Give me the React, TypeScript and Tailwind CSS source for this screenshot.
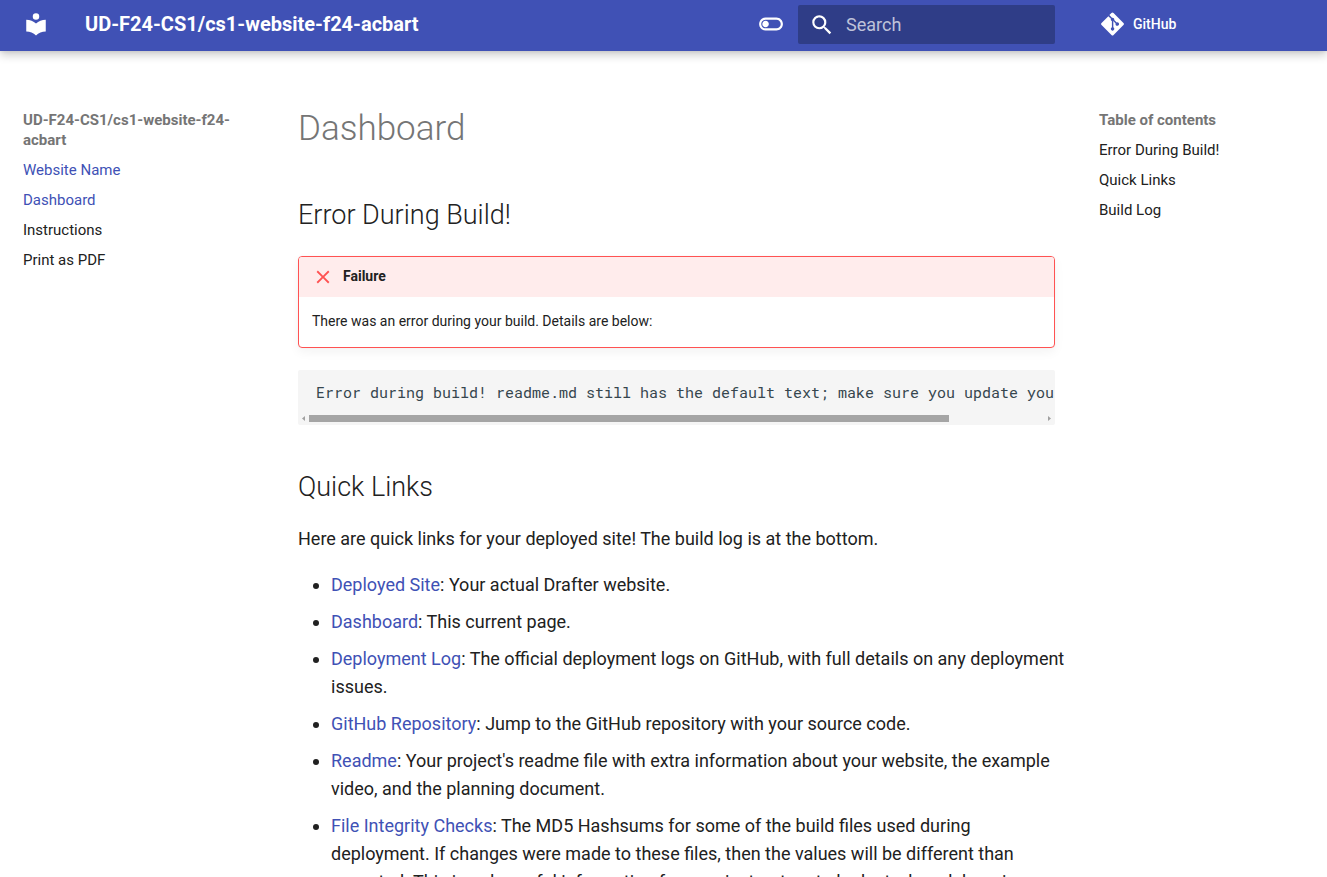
import React from "react";

const nav = [
  { label: "Website Name", active: true },
  { label: "Dashboard", active: true },
  { label: "Instructions", active: false },
  { label: "Print as PDF", active: false },
];

const toc = ["Error During Build!", "Quick Links", "Build Log"];

const links = [
  { name: "Deployed Site", text: "Your actual Drafter website." },
  { name: "Dashboard", text: "This current page." },
  {
    name: "Deployment Log",
    text: "The official deployment logs on GitHub, with full details on any deployment issues.",
  },
  { name: "GitHub Repository", text: "Jump to the GitHub repository with your source code." },
  {
    name: "Readme",
    text: "Your project's readme file with extra information about your website, the example video, and the planning document.",
  },
  {
    name: "File Integrity Checks",
    text: "The MD5 Hashsums for some of the build files used during deployment. If changes were made to these files, then the values will be different than expected. This is only useful information for your instructors to look at when debugging.",
  },
];

function Icon({ d, className }: { d: string; className: string }) {
  return (
    <svg viewBox="0 0 24 24" className={className} fill="currentColor" aria-hidden="true">
      <path d={d} />
    </svg>
  );
}

const LIBRARY =
  "M12 8a3 3 0 0 0 3-3 3 3 0 0 0-3-3 3 3 0 0 0-3 3 3 3 0 0 0 3 3m0 3.54C9.64 9.35 6.5 8 3 8v11c3.5 0 6.64 1.35 9 3.54 2.36-2.19 5.5-3.54 9-3.54V8c-3.5 0-6.64 1.35-9 3.54Z";
const TOGGLE =
  "M17 6H7c-3.31 0-6 2.69-6 6s2.69 6 6 6h10c3.31 0 6-2.69 6-6s-2.69-6-6-6zm0 10H7c-2.21 0-4-1.79-4-4s1.79-4 4-4h10c2.21 0 4 1.79 4 4s-1.79 4-4 4zM7 9c-1.66 0-3 1.34-3 3s1.34 3 3 3 3-1.34 3-3-1.34-3-3-3z";
const MAGNIFY =
  "M9.5 3A6.5 6.5 0 0 1 16 9.5c0 1.61-.59 3.09-1.56 4.23l.27.27h.79l5 5-1.5 1.5-5-5v-.79l-.27-.27A6.516 6.516 0 0 1 9.5 16 6.5 6.5 0 0 1 3 9.5 6.5 6.5 0 0 1 9.5 3m0 2C7 5 5 7 5 9.5S7 14 9.5 14 14 12 14 9.5 12 5 9.5 5Z";
const CLOSE =
  "M19 6.41 17.59 5 12 10.59 6.41 5 5 6.41 10.59 12 5 17.59 6.41 19 12 13.41 17.59 19 19 17.59 13.41 12 19 6.41Z";
const GIT =
  "M439.55 236.05 244 40.45a28.87 28.87 0 0 0-40.81 0l-40.66 40.63 51.52 51.52c27.06-9.14 52.68 16.77 43.39 43.68l49.66 49.66c34.23-11.8 61.18 31 35.47 56.69-26.49 26.49-70.21-2.87-56-37.34L240.22 199v121.85c25.3 12.54 22.26 41.85 9.08 55a34.34 34.34 0 0 1-48.55 0c-17.57-17.6-11.07-46.91 11.25-56v-123c-20.8-8.51-24.6-30.74-18.64-45L142.57 101 8.45 235.14a28.86 28.86 0 0 0 0 40.81l195.61 195.6a28.86 28.86 0 0 0 40.8 0l194.69-194.69a28.86 28.86 0 0 0 0-40.81z";

function Header() {
  return (
    <header className="relative z-10 h-[51px] bg-[#4051b5] text-white shadow-[0_0_4px_rgba(0,0,0,0.1),0_4px_9px_rgba(0,0,0,0.2)]">
      <div className="mx-auto flex h-full max-w-[1342px] items-center pl-[23px]">
        <a href="#home" aria-label="Home" className="mb-1 mr-9">
          <Icon d={LIBRARY} className="size-[26px]" />
        </a>
        <span className="mb-1 min-w-0 flex-1 truncate text-xl font-bold">
          UD-F24-CS1/cs1-website-f24-acbart
        </span>
        <button type="button" aria-label="Switch to dark mode" className="mb-1 mr-[14px]">
          <Icon d={TOGGLE} className="size-[26px]" />
        </button>
        <label className="mb-0.5 flex h-[39px] w-[257px] items-center rounded-xs bg-[#2f3d87] pl-[11px]">
          <Icon d={MAGNIFY} className="size-[26px] shrink-0" />
          <input
            type="text"
            placeholder="Search"
            aria-label="Search"
            className="ml-[11px] w-full min-w-0 bg-transparent text-lg outline-none placeholder:text-white/70"
          />
        </label>
        <a href="#repo" className="mb-1 ml-[46px] flex w-[226px] items-center text-sm font-medium">
          <svg viewBox="0 0 448 512" className="h-[26px] w-[23px]" fill="currentColor" aria-hidden="true">
            <path d={GIT} />
          </svg>
          <span className="ml-[9px]">GitHub</span>
        </a>
      </div>
    </header>
  );
}

export default function App() {
  return (
    <div className="h-screen overflow-hidden bg-white font-['Roboto',sans-serif] text-[#212121]">
      <Header />
      <div className="mx-auto flex max-w-[1342px]">
        <nav aria-label="Site" className="w-[266px] shrink-0 pl-[23px] pr-5 pt-[59px] text-[15px] leading-5">
          <div className="font-bold text-[#757575]">UD-F24-CS1/cs1-website-f24-acbart</div>
          <ul>
            {nav.map((item) => (
              <li key={item.label} className="mt-[10px]">
                <a href="#page" className={item.active ? "text-[#4051b5]" : ""}>
                  {item.label}
                </a>
              </li>
            ))}
          </ul>
        </nav>

        <main className="min-w-0 flex-1 px-8 pt-[55px] text-lg leading-7">
          <h1 className="text-[35px] font-light leading-[46px] text-[#757575]">Dashboard</h1>

          <h2 className="mt-[43px] text-[27px] font-light leading-10">Error During Build!</h2>
          <div className="mt-[21px] rounded-[4px] border border-[#ff5252] text-sm shadow-[0_4px_11px_rgba(0,0,0,0.05),0_0_1px_rgba(0,0,0,0.1)]">
            <div className="flex h-10 items-center rounded-t-[3px] bg-[#ffecec] pl-[13px] font-bold">
              <Icon d={CLOSE} className="mr-[9px] size-[22px] text-[#ff5252]" />
              <span className="mb-0.5">Failure</span>
            </div>
            <p className="px-[13px] pb-[15px] pt-[13px] leading-[22px]">
              There was an error during your build. Details are below:
            </p>
          </div>

          <div className="mt-[22px] overflow-hidden rounded-xs bg-[#f5f5f5] text-[#36464e]">
            <pre className="overflow-hidden px-[18px] pt-[11px] font-['Roboto_Mono','DejaVu_Sans_Mono',monospace] text-[15px] leading-[22px]">
              <code className="block font-['Roboto_Mono','DejaVu_Sans_Mono',monospace]">
                Error during build! readme.md still has the default text; make sure you update your readme.md
              </code>
            </pre>
            <div className="mt-3 flex h-[10px] items-center px-1 pb-[3px]" aria-hidden="true">
              <svg viewBox="0 0 3 5" className="mr-1 h-[5px] w-[3px] shrink-0" fill="#a0a0a0">
                <path d="M3 0v5L0 2.5z" />
              </svg>
              <div className="flex-1">
                <div className="h-[7px] w-[640px] max-w-[87%] bg-[#a5a5a5]" />
              </div>
              <svg viewBox="0 0 3 5" className="h-[5px] w-[3px] shrink-0" fill="#a0a0a0">
                <path d="M0 0v5l3-2.5z" />
              </svg>
            </div>
          </div>

          <h2 className="mt-[42px] text-[27px] font-light leading-10">Quick Links</h2>
          <p className="mt-[18px]">Here are quick links for your deployed site! The build log is at the bottom.</p>
          <ul className="-mr-3 ml-[33px] mt-[18px] list-disc">
            {links.map((link) => (
              <li key={link.name} className="mb-[9px]">
                <a href="#link" className="text-[#4051b5]">
                  {link.name}
                </a>
                : {link.text}
              </li>
            ))}
          </ul>
        </main>

        <aside className="w-60 shrink-0 pl-3 pt-[59px] text-[15px] leading-5">
          <div className="font-bold text-[#757575]">Table of contents</div>
          <ul>
            {toc.map((item) => (
              <li key={item} className="mt-[10px]">
                <a href="#section">{item}</a>
              </li>
            ))}
          </ul>
        </aside>
      </div>
    </div>
  );
}
